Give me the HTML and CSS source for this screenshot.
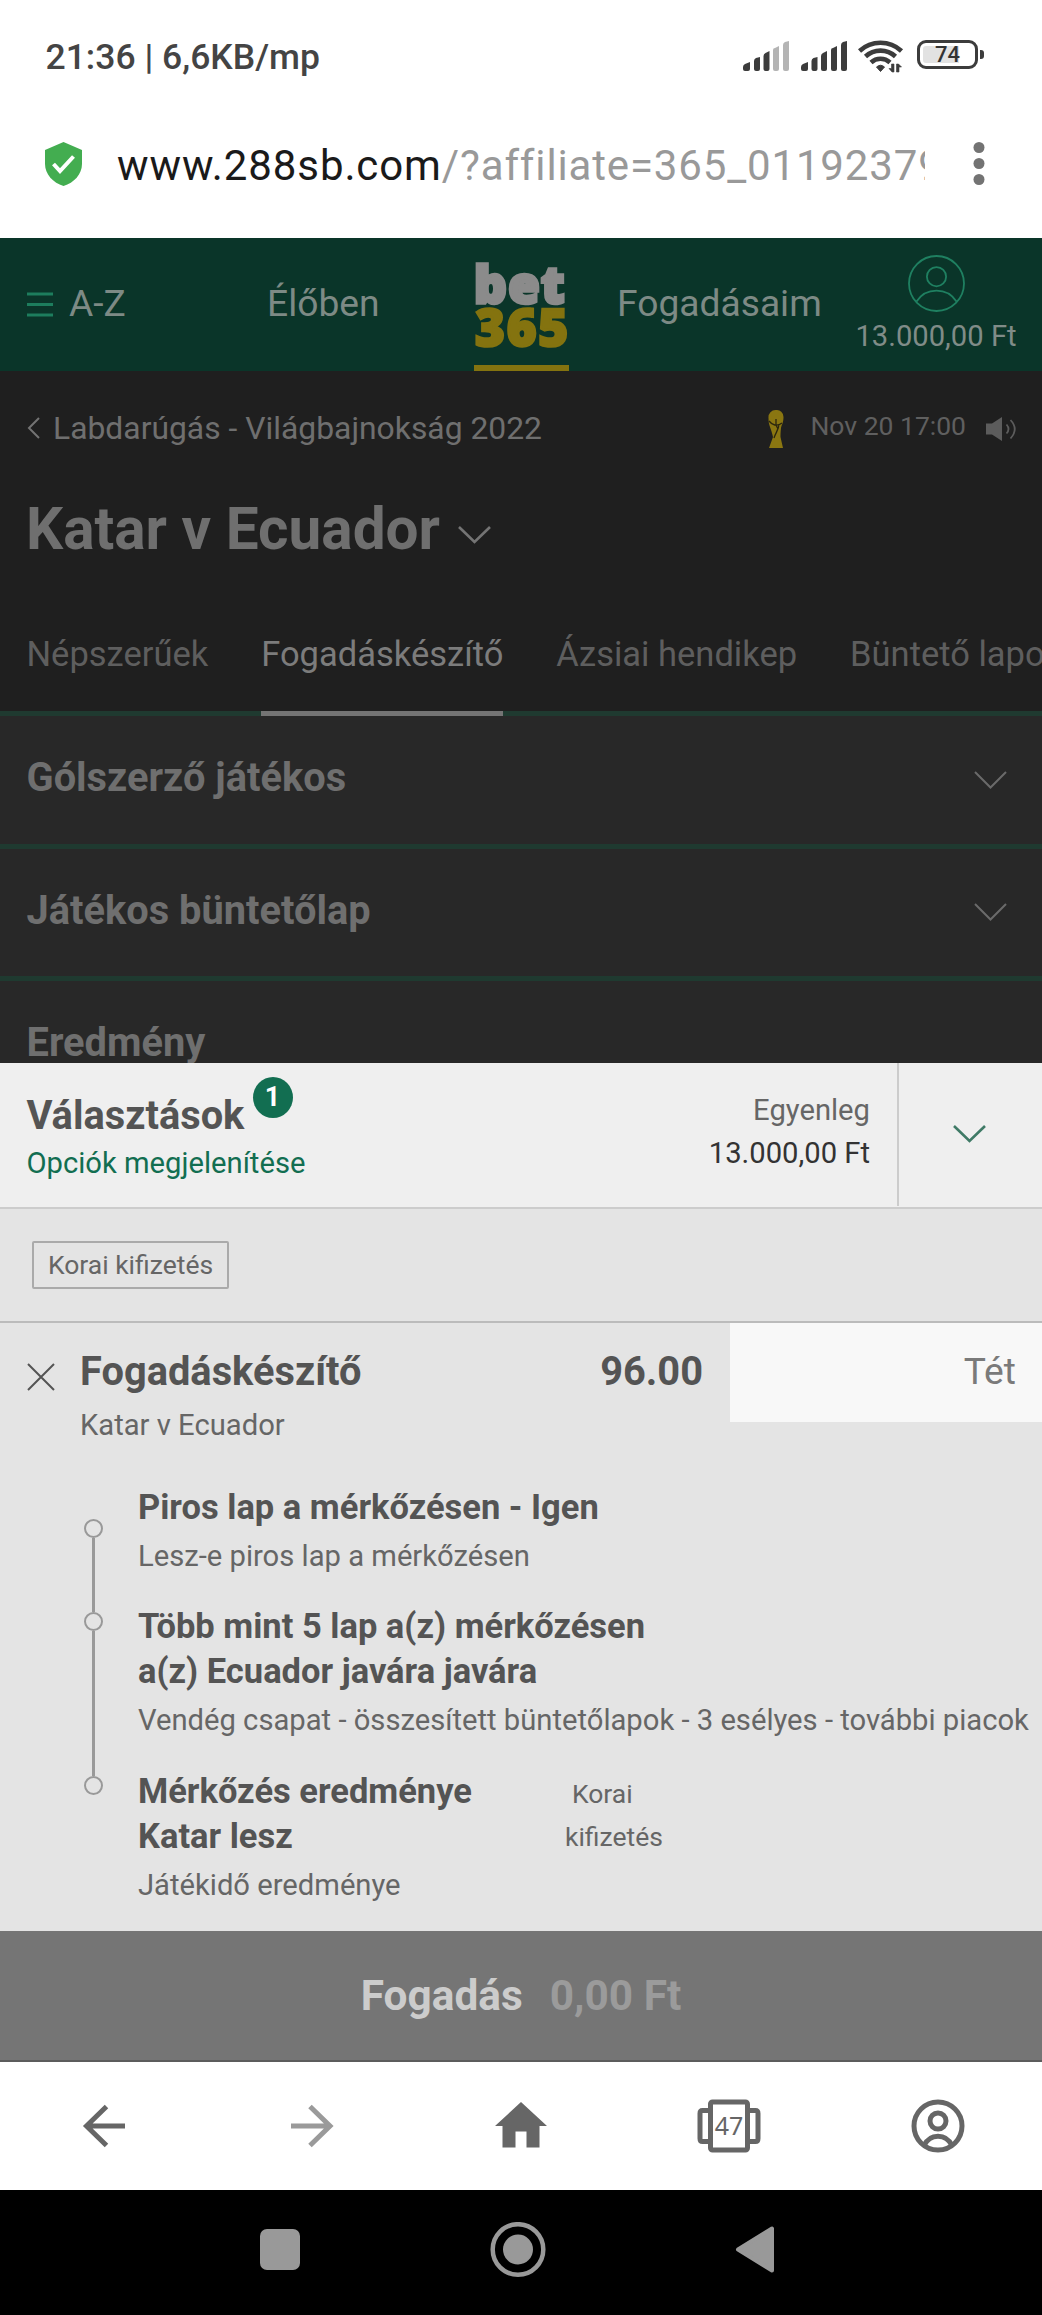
FILE: index.html
```html
<!DOCTYPE html>
<html lang="hu">
<head>
  <meta charset="utf-8">
  <title>Katar v Ecuador</title>
  <meta name="viewport" content="width=device-width,initial-scale=1">
  <link rel="stylesheet" href="styles.css">
</head>
<body>

  <!-- Phone status bar -->
  <div class="status">
    <span class="clock">21:36 | 6,6KB/mp</span>
    <svg class="signals" width="104" height="30" viewBox="0 0 104 30" fill="#3c3c3c">
      <path d="M0 28v-2q0-2 2-3l5-2v7q0 2-2 2H2q-2 0-2-2z"/>
      <path d="M11 28v-8q0-2 2-3l4-1v12q0 2-2 2h-2q-2 0-2-2z"/>
      <path d="M20.500 28V15q0-2 2-3l4-2v18q0 2-2 2h-2q-2 0-2-2z"/>
      <g fill="#b4b4b4">
        <path d="M30 28V9q0-2 2-2l4-2v23q0 2-2 2h-2q-2 0-2-2z"/>
        <path d="M40 28V4q0-2 2-3l4-1v28q0 2-2 2h-2q-2 0-2-2z"/>
      </g>
      <path d="M58 28v-2q0-2 2-3l5-2v7q0 2-2 2h-3q-2 0-2-2z"/>
      <path d="M68.500 28v-8q0-2 2-3l4-1v12q0 2-2 2h-2q-2 0-2-2z"/>
      <path d="M78 28V15q0-2 2-3l4-2v18q0 2-2 2h-2q-2 0-2-2z"/>
      <path d="M88 28V9q0-2 2-2l4-2v23q0 2-2 2h-2q-2 0-2-2z"/>
      <path d="M98 28V4q0-2 2-3l4-1v28q0 2-2 2h-2q-2 0-2-2z"/>
    </svg>
    <svg class="wifi" width="46" height="34" viewBox="0 0 46 34">
      <g fill="none" stroke="#3c3c3c" stroke-width="4.600">
        <path d="M1.500 12a31 31 0 0 1 42 0"/>
        <path d="M7.500 17.500a22 22 0 0 1 30 0"/>
        <path d="M13 23.500a14 14 0 0 1 19 0"/>
      </g>
      <path d="M18.500 28q4-3.500 8 0l-4 4.500z" fill="#3c3c3c" stroke="#3c3c3c" stroke-linejoin="round"/>
      <path d="M31 29.500h2.500V25H36v8h-2zM43.500 28H41v5h-2.500v-8h2z" fill="#3c3c3c" stroke="#3c3c3c" stroke-width=".6"/>
    </svg>
    <div class="battery"><span class="level">74</span></div>
  </div>

  <!-- Address bar -->
  <div class="address">
    <svg width="37" height="44" viewBox="0 0 37 44">
      <path d="M18.500 0L37 8v14c0 10-8 19-18.500 22C8 41 0 32 0 22V8z" fill="#43ad50"/>
      <path d="M8.500 22l6.500 7L28.500 14.500" fill="none" stroke="#fff" stroke-width="4"/>
    </svg>
    <div class="url">www.288sb.com<span>/?affiliate=365_01192379</span></div>
    <svg class="more" width="12" height="43" viewBox="0 0 12 43" fill="#737373">
      <circle cx="6" cy="5.500" r="5.500"/><circle cx="6" cy="21.500" r="5.500"/><circle cx="6" cy="37.500" r="5.500"/>
    </svg>
  </div>

  <!-- Site header -->
  <header class="top">
    <a class="az">
      <svg width="26" height="25" viewBox="0 0 26 25" fill="#1d7d5d"><path d="M0 .5h26v3H0zM0 11h26v3H0zM0 21.500h26v3H0z"/></svg>
      A-Z
    </a>
    <a class="live">Élőben</a>
    <a class="logo"><span class="bet">bet</span><span class="n365">365</span></a>
    <a class="mybets">Fogadásaim</a>
    <div class="account">
      <svg width="57" height="57" viewBox="0 0 57 57" fill="none" stroke="#1f8061" stroke-width="1.800">
        <circle cx="28.500" cy="28.500" r="27.500"/><circle cx="28.500" cy="21.700" r="9.600"/>
        <path d="M8.500 46.500C18 32 39 32 48.500 46.500"/>
      </svg>
      <span>13.000,00 Ft</span>
    </div>
  </header>

  <!-- Event -->
  <section class="event">
    <div class="crumbs">
      <svg width="13" height="22" viewBox="0 0 13 22" fill="none" stroke="#737373" stroke-width="2"><path d="M12 1L2 11l10 10"/></svg>
      <span class="path">Labdarúgás - Világbajnokság 2022</span>
      <svg class="trophy" width="16" height="38" viewBox="0 0 16 38">
        <path d="M8 0a7 7 0 0 1 7.500 7c0 6-2 8-2.500 11-.5 4-.5 7-.5 9l2.500 11H1l4-11c-1-4-1.500-6-3-10C1 14 .5 12 .5 8A7.300 7.300 0 0 1 8 0z" fill="#8a7611"/>
        <path d="M1 11c3 4 8 6 13 2M8 9v6l2 4M11 14c0 5-3 8-5 14" fill="none" stroke="#2b260e" stroke-width="1.300"/>
      </svg>
      <span class="when">Nov 20 17:00</span>
      <svg width="30" height="24" viewBox="0 0 30 24"><path d="M0 6.500h6L16 0v24L6 17.500H0z" fill="#5c5c5c"/><path d="M20.500 7.500q4 4.500 0 9M24.500 3q8.500 9 0 18.500" fill="none" stroke="#5c5c5c" stroke-width="1.800"/></svg>
    </div>
    <h1>Katar v Ecuador
      <svg width="33" height="18" viewBox="0 0 33 18" fill="none" stroke="#747474" stroke-width="2.600"><path d="M1 1l15.500 15L32 1"/></svg>
    </h1>
    <nav class="tabs">
      <a>Népszerűek</a>
      <a class="active">Fogadáskészítő</a>
      <a>Ázsiai hendikep</a>
      <a>Büntető lapok</a>
    </nav>
  </section>

  <section class="markets">
    <div class="market">Gólszerző játékos
      <svg width="33" height="18" viewBox="0 0 33 18"><path d="M1 1l15.500 15.500L32 1"/></svg>
    </div>
    <div class="market">Játékos büntetőlap
      <svg width="33" height="18" viewBox="0 0 33 18"><path d="M1 1l15.500 15.500L32 1"/></svg>
    </div>
    <div class="market">Eredmény</div>
  </section>

  <!-- Bet slip -->
  <section class="slip">
    <div class="slip-head">
      <div class="picks">
        <h2>Választások<span class="badge">1</span></h2>
        <a>Opciók megjelenítése</a>
      </div>
      <div class="balance">
        <span>Egyenleg</span>
        <strong>13.000,00 Ft</strong>
      </div>
      <div class="collapse">
        <svg width="33" height="18" viewBox="0 0 33 18" fill="none" stroke="#3f7a66" stroke-width="2.600"><path d="M1 1l15.500 15L32 1"/></svg>
      </div>
    </div>

    <div class="cashout"><span>Korai kifizetés</span></div>

    <div class="selection">
      <svg class="close" width="28" height="28" viewBox="0 0 28 28" fill="none" stroke="#545454" stroke-width="2"><path d="M1 1l26 26M27 1L1 27"/></svg>
      <div class="sel-name">
        <h3>Fogadáskészítő</h3>
        <span>Katar v Ecuador</span>
      </div>
      <span class="odds">96.00</span>
      <div class="stake">Tét</div>
    </div>

    <div class="legs">
      <div class="leg one">
        <h4>Piros lap a mérkőzésen - Igen</h4>
        <p>Lesz-e piros lap a mérkőzésen</p>
      </div>
      <div class="leg two">
        <h4>Több mint 5 lap a(z) mérkőzésen<br>a(z) Ecuador javára javára</h4>
        <p>Vendég csapat - összesített büntetőlapok - 3 esélyes - további piacok</p>
      </div>
      <div class="leg three">
        <div class="leg-row">
          <h4>Mérkőzés eredménye<br>Katar lesz</h4>
          <div class="early"><span>Korai</span><span>kifizetés</span></div>
        </div>
        <p>Játékidő eredménye</p>
      </div>
    </div>

    <div class="place">Fogadás <span>0,00 Ft</span></div>
  </section>

  <!-- Browser toolbar -->
  <nav class="toolbar">
    <svg width="54" height="54" viewBox="0 0 54 54" fill="none" stroke="#666" stroke-width="5"><path d="M48 27H9M29.500 7.500L9.500 27l20 19.500"/></svg>
    <svg width="54" height="54" viewBox="0 0 54 54" fill="none" stroke="#9a9a9a" stroke-width="5"><path d="M5 27h39M24 7.500L44 27l-20 19.500"/></svg>
    <svg width="54" height="54" viewBox="0 0 54 54" fill="#666"><path d="M27 3L53 27h-7.500v21.500h-13v-16h-11v16h-13V27H1z"/></svg>
    <svg width="64" height="54" viewBox="0 0 64 54">
      <g fill="none" stroke="#666" stroke-width="5">
        <rect x="13.500" y="3" width="37" height="48" rx="2"/>
        <path d="M11 11.500H5.500q-2.500 0-2.500 3v25q0 3 2.500 3H11M53 11.500h5.500q2.500 0 2.500 3v25q0 3-2.500 3H53"/>
      </g>
      <text x="32" y="35.500" text-anchor="middle" class="tab-count">47</text>
    </svg>
    <svg width="54" height="54" viewBox="0 0 54 54" fill="none" stroke="#666" stroke-width="5">
      <circle cx="27" cy="27" r="24"/><circle cx="27" cy="22" r="8"/>
      <path d="M13 46.500c6-12.500 22-12.500 28 0"/>
    </svg>
  </nav>

  <!-- Android navigation -->
  <nav class="android">
    <svg width="600" height="56" viewBox="0 0 600 56" fill="#999">
      <rect x="60" y="7" width="40" height="41" rx="7"/>
      <circle cx="318" cy="27.500" r="15"/>
      <circle cx="318" cy="27.500" r="25.300" fill="none" stroke="#999" stroke-width="4.500"/>
      <path d="M538 27.500L572 6.500v42z" stroke="#999" stroke-width="4" stroke-linejoin="round"/>
    </svg>
  </nav>

</body>
</html>
```
FILE: styles.css
```css
/* RESET */
*, *::before, *::after { box-sizing:border-box; margin:0; padding:0; }
html, body { height:100%; font-family:Roboto, sans-serif; background:#000; }
body {
  width:1042px; height:2315px; overflow:hidden;
  display:flex; flex-direction:column;
}
svg { display:block; flex:none; }
span, a, h1, h2, h3, h4, p { white-space:nowrap; }

/* STATUS BAR */
.status {
  height:96px; padding:0 64px 0 45.500px;
  display:flex; align-items:flex-start;
  background:#fff; color:#444;
}
.clock { margin-top:37px; font-size:35.500px; line-height:41px; font-weight:500; }
.signals { margin:41px 11px 0 auto; }
.wifi { margin-top:39px; }
.battery {
  position:relative; width:61px; height:29px; margin:40px 0 0 13px;
  border:3px solid #3c3c3c; border-radius:9px; padding:3px;
}
.battery::after {
  content:""; position:absolute; right:-9px; top:7px;
  width:4px; height:9px; border-radius:0 3px 3px 0; background:#3c3c3c;
}
.level {
  display:block; width:49px; height:17px; border-radius:3px;
  background:linear-gradient(90deg,#e2e2e2 74%,#fff 74%);
  font-size:22px; line-height:18px; font-weight:500; text-align:center; color:#333;
}

/* ADDRESS BAR */
.address {
  height:142px; padding:46px 57px 0 45px;
  display:flex; background:#fff;
}
.url {
  width:808px; margin:-1px 0 0 35px; overflow:hidden; white-space:nowrap;
  font-size:42px; line-height:50px; letter-spacing:.9px; color:#1a1a1a;
}
.url span { color:#999; letter-spacing:.85px; }
.more { margin-left:auto; }

/* HEADER */
.top {
  height:133px; flex:none;
  display:grid; grid-template-columns:267px 207px 95px 260px 1fr;
  background:#0a3529; color:#7d8a85;
  font-size:37.200px; line-height:44px;
}
.az { display:flex; align-items:center; gap:16px; height:44px; margin-top:43px; padding-left:27px; }
.az svg { margin-top:2px; }
.live, .mybets { margin-top:43px; }
.mybets { padding-left:48px; }
.logo {
  display:flex; flex-direction:column; padding:12px 0 0;
  border-bottom:6px solid #84730f;
  font-family:"Noto Sans", "Open Sans", sans-serif; font-weight:900;
}
.bet {
  color:#8b8b8b; font-size:51px; line-height:66px; letter-spacing:1.400px;
  -webkit-text-stroke:3.400px #8b8b8b;
}
.n365 {
  color:#84730f; font-size:51px; line-height:42px; margin:-11px 0 0 1px; letter-spacing:1.800px;
  -webkit-text-stroke:2.600px #84730f;
}
.account {
  display:flex; flex-direction:column; align-items:center;
  padding:17px 25px 0 0; width:187px; justify-self:end;
  color:#808c88; font-size:29.200px; line-height:32px;
}
.account span { margin-top:8px; }

/* EVENT */
.event { height:345px; flex:none; background:#1f1f1f; color:#6f6f6f; }
.crumbs { display:flex; align-items:flex-start; height:105px; padding:46px 26px 0 27px; }
.path { margin:-8.500px 0 0 13px; font-size:31.850px; line-height:38px; }
.trophy { margin:-7px 26px 0 auto; }
.when { margin:-8px 20px 0 0; font-size:26.500px; line-height:34px; color:#5f5f5f; }
h1 {
  display:flex; gap:18px; padding-left:26px; height:104px;
  font-size:58.500px; line-height:106px; font-weight:700;
}
h1 svg { margin-top:50px; }
.tabs {
  display:flex; gap:53px; height:136px; padding:39px 0 0 26.500px;
  border-bottom:5px solid #1f3a30; font-size:34.500px; line-height:71px; color:#5e5e5e;
}
.tabs a { flex:none; height:97px; }
.tabs .active { color:#7c7c7c; border-bottom:5px solid #747474; }

/* MARKETS */
.markets { height:347px; flex:none; background:#282828; overflow:hidden; }
.market {
  display:flex; justify-content:space-between; height:132.600px; padding:0 35px 0 26.500px;
  border-bottom:5px solid #1f3a30;
  color:#6f6f6f; font-size:39.800px; line-height:124.500px; font-weight:700;
}
.market svg { margin-top:54.500px; fill:none; stroke:#6a6a6a; stroke-width:2; }

/* SLIP */
.slip { height:999px; flex:none; background:#e4e4e4; color:#545454; }
.slip-head { display:flex; height:146px; background:#efefef; border-bottom:2px solid #ccc; }
.picks { flex:1; padding:30px 0 0 26.500px; }
.picks h2 { position:relative; width:max-content; font-size:39.800px; line-height:45px; }
.badge {
  position:absolute; left:226px; top:-16px; width:40px; height:41px; border-radius:50%;
  background:#126e51; color:#fff; font-size:27px; line-height:40px; text-align:center;
}
.picks a { display:block; color:#126e51; font-size:29.200px; line-height:44px; margin-top:3px; }
.balance {
  display:flex; flex-direction:column; padding:26px 27px 0 0; text-align:right;
  font-size:29.200px; line-height:42.500px; color:#666;
}
.balance strong { font-weight:400; color:#333; }
.collapse { width:145px; height:143px; border-left:2px solid #ccc; padding:62px 0 0 54px; }

.cashout { height:114px; padding:32px; border-bottom:2px solid #bbb; }
.cashout span {
  display:block; width:197px; height:48px; border:2px solid #aaa; border-radius:2px;
  font-size:26.500px; line-height:43px; text-align:center; color:#666;
}

.selection { display:flex; height:153px; font-size:39.800px; line-height:44px; }
.sel-name, .odds { padding-top:26.500px; }
.close { margin:40px 25px 0 27px; }
.sel-name h3 { font-size:39.800px; line-height:44px; }
.sel-name span { display:block; font-size:29.200px; line-height:34px; margin-top:14.500px; color:#666; }
.odds { margin-left:auto; padding-right:27px; font-weight:700; }
.stake {
  width:312px; height:99px; padding:26px 26px 0 0;
  background:#f8f8f8; color:#7a7a7a; font-size:37.200px; text-align:right;
}

/* LEGS */
.legs { height:455px; padding:9px 0 0 138px; }
.leg { position:relative; }
.leg h4 { font-size:34.500px; line-height:45px; }
.leg p { font-size:29.200px; line-height:34px; margin-top:8.500px; color:#666; }
.one { height:119px; }
.two { height:165px; }
.leg::before {
  content:""; position:absolute; left:-54px; top:34px;
  width:19px; height:19px; border:2px solid #999; border-radius:50%;
}
.two::before { top:8px; }
.three::before { top:7px; }
.one::after, .two::after {
  content:""; position:absolute; left:-46px; top:53px;
  width:3px; height:74px; background:#999;
}
.two::after { top:27px; height:145px; }
.leg-row { display:flex; }
.early {
  display:flex; flex-direction:column; margin:4px 0 0 93px;
  font-size:26.500px; line-height:42.500px; color:#666;
}
.early span:first-child { padding-left:7px; }

.place {
  display:flex; justify-content:center; gap:27px; height:131px;
  background:#757575; border-bottom:2px solid #5c5c5c; color:#ccc;
  font-size:42.400px; line-height:129px; font-weight:700;
}
.place span { color:#9b9b9b; }

/* BOTTOM BARS */
.toolbar {
  height:128px; flex:none; background:#fff;
  display:grid; grid-template-columns:repeat(5,1fr); place-items:center;
}
.tab-count { font:400 25px "Noto Sans", sans-serif; fill:#666; stroke:none; }
.android { height:125px; flex:none; padding:32px 0 0 200px; }
```
